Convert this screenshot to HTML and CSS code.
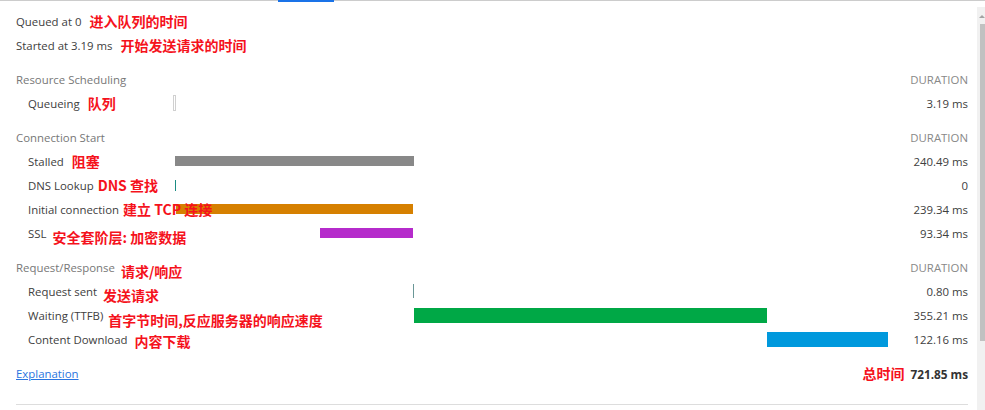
FILE: index.html
```html
<!DOCTYPE html>
<html lang="zh-CN">
<head>
<meta charset="utf-8">
<title>Timing</title>
<link rel="stylesheet" href="styles.css">
</head>
<body>
<div class="tabline"><div class="tab-active"></div></div>
<div class="frame">
  <main class="panel">
    <div class="line"><span class="label">Queued at 0</span><span class="note">进入队列的时间</span></div>
    <div class="line"><span class="label">Started at 3.19 ms</span><span class="note">开始发送请求的时间</span></div>

    <section class="group">
      <div class="row head"><div class="name"><span class="label">Resource Scheduling</span></div><div class="track"></div><div class="dur">DURATION</div></div>
      <div class="row"><div class="name sub"><span class="label">Queueing</span><span class="note">队列</span></div><div class="track"><span class="bar queue" style="margin-left:0;width:3px"></span></div><div class="dur">3.19 ms</div></div>
    </section>

    <section class="group">
      <div class="row head"><div class="name"><span class="label">Connection Start</span></div><div class="track"></div><div class="dur">DURATION</div></div>
      <div class="row"><div class="name sub"><span class="label">Stalled</span><span class="note">阻塞</span></div><div class="track"><span class="bar thin-bar stalled" style="margin-left:2px;width:239px"></span></div><div class="dur">240.49 ms</div></div>
      <div class="row"><div class="name sub"><span class="label">DNS Lookup</span><span class="note tight">DNS 查找</span></div><div class="track"><span class="tick dns" style="margin-left:2px"></span></div><div class="dur">0</div></div>
      <div class="row"><div class="name sub"><span class="label">Initial connection</span><span class="note tight">建立 TCP 连接</span></div><div class="track"><span class="bar thin-bar connect" style="margin-left:3px;width:237px"></span></div><div class="dur">239.34 ms</div></div>
      <div class="row"><div class="name sub"><span class="label">SSL</span><span class="note shift">安全套阶层: 加密数据</span></div><div class="track"><span class="bar thin-bar ssl" style="margin-left:147px;width:93px"></span></div><div class="dur">93.34 ms</div></div>
    </section>

    <section class="group">
      <div class="row head"><div class="name"><span class="label">Request/Response</span><span class="note shift">请求/响应</span></div><div class="track"></div><div class="dur">DURATION</div></div>
      <div class="row"><div class="name sub"><span class="label">Request sent</span><span class="note shift">发送请求</span></div><div class="track"><span class="tick sent" style="margin-left:240px"></span></div><div class="dur">0.80 ms</div></div>
      <div class="row"><div class="name sub"><span class="label">Waiting (TTFB)</span><span class="note shift-lg">首字节时间,反应服务器的响应速度</span></div><div class="track"><span class="bar wait" style="margin-left:241px;width:353px"></span></div><div class="dur">355.21 ms</div></div>
      <div class="row"><div class="name sub"><span class="label">Content Download</span><span class="note shift-sm">内容下载</span></div><div class="track"><span class="bar download" style="margin-left:594px;width:121px"></span></div><div class="dur">122.16 ms</div></div>
    </section>

    <div class="footer">
      <a class="explain" href="#">Explanation</a>
      <div class="total"><span class="note">总时间</span><span class="total-value">721.85 ms</span></div>
    </div>
    <div class="divider"></div>
  </main>
  <aside class="scrollbar">
    <div class="arrow"></div>
    <div class="thumb"></div>
  </aside>
</div>
</body>
</html>
```

FILE: styles.css
```css
html, body {
  margin: 0;
  padding: 0;
  background: #fff;
}

body {
  font-family: "Open Sans", "Noto Sans", sans-serif;
  font-size: 11.4px;
  color: #404040;
  width: 985px;
  height: 410px;
  overflow: hidden;
}

.tabline {
  height: 2px;
  border-top: 1px solid #cccccc;
  box-sizing: border-box;
  display: flex;
}

.tab-active {
  margin-left: 278px;
  margin-top: -1px;
  width: 56px;
  height: 2px;
  background: #1a73e8;
}

.frame {
  display: flex;
  height: 408px;
}

.panel {
  flex: 1;
  padding: 7px 9px 0 16px;
  display: flex;
  flex-direction: column;
}

.line {
  display: flex;
  align-items: center;
  height: 24px;
  white-space: nowrap;
}

.label,
.dur,
.explain,
.total-value {
  line-height: 16px;
  padding-top: 2px;
}

.note {
  position: relative;
  z-index: 1;
  font-family: "Noto Sans CJK SC", "Noto Sans", sans-serif;
  font-weight: 700;
  font-size: 14px;
  line-height: 16px;
  color: #f5121c;
  margin-left: 8px;
  white-space: nowrap;
}

.note.tight { margin-left: 4px; }
.note.shift { margin-top: 8px; margin-left: 6px; }
.note.shift-lg { margin-top: 10px; margin-left: 5px; }
.note.shift-sm { margin-top: 4px; margin-left: 7px; }

.group {
  margin-top: 10px;
}

.row {
  display: grid;
  grid-template-columns: 157px 717px 1fr;
  height: 24px;
  align-items: center;
}

.row.head {
  color: #777;
}

.name {
  display: flex;
  align-items: center;
  height: 24px;
  min-width: 0;
  white-space: nowrap;
}

.name.sub {
  padding-left: 12px;
}

.track {
  display: flex;
  align-items: center;
  height: 24px;
}

.dur {
  text-align: right;
  white-space: nowrap;
}

.row.head .dur {
  color: #888;
}

.bar {
  display: block;
  flex: none;
  height: 15px;
  box-sizing: border-box;
}

.bar.thin-bar {
  height: 10px;
}

.bar.queue {
  height: 16px;
  border: 1px solid #d0d0d0;
  background: #fff;
}

.bar.stalled { background: #888888; }
.bar.connect { background: #d68000; }
.bar.ssl { background: #b52bcb; }
.bar.wait { background: #00a846; }
.bar.download { background: #0099dd; }

.tick {
  display: block;
  flex: none;
  width: 1px;
}

.tick.dns {
  height: 11px;
  background: #1b8c83;
}

.tick.sent {
  height: 14px;
  background: #6a9797;
}

.footer {
  margin-top: 10px;
  height: 24px;
  display: flex;
  align-items: center;
  justify-content: space-between;
}

.explain {
  color: #2a75e0;
  text-decoration: underline;
}

.total {
  display: flex;
  align-items: center;
}

.total .note {
  margin-left: 0;
  margin-right: 6px;
}

.total-value {
  font-weight: 700;
  color: #333;
  font-size: 11.8px;
}

.divider {
  margin-top: 19px;
  height: 1px;
  background: #dddddd;
}

.scrollbar {
  width: 8px;
  margin-top: 5px;
  background: #f1f1f1;
  display: flex;
  flex-direction: column;
  align-items: flex-end;
}

.arrow {
  margin-top: 8px;
  margin-right: 0;
  width: 0;
  height: 0;
  border-left: 3px solid transparent;
  border-right: 3px solid transparent;
  border-bottom: 3px solid #a3a3a3;
}

.thumb {
  margin-top: 6px;
  width: 5px;
  height: 317px;
  background: #c1c1c1;
}
```
